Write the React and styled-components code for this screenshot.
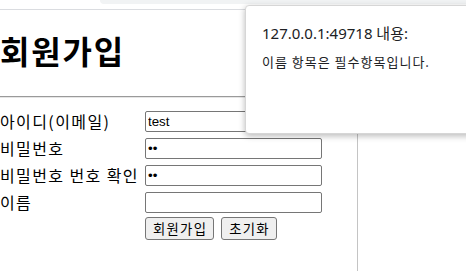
import React from "react";
import styled, { createGlobalStyle } from "styled-components";

const Global = createGlobalStyle`
  html, body { margin: 0; padding: 0; background: #fff; }
  body {
    font-family: "Noto Sans CJK KR", "Noto Sans", sans-serif;
    color: #000;
    overflow: hidden;
    height: 271px;
  }
`;

const Screen = styled.div`
  position: relative;
  width: 466px;
  height: 271px;
  overflow: hidden;
  display: flex;
  flex-direction: column;
`;

const TopBar = styled.div`
  height: 9px;
  flex: none;
  border-bottom: 1px solid #dadce0;
  display: flex;
  justify-content: flex-end;
`;

const TabStrip = styled.div`
  width: 366px;
  height: 4px;
  background: #f1f3f4;
  border-bottom-left-radius: 6px;
`;

const Body = styled.div`
  flex: 1;
  display: flex;
`;

const Pane = styled.div`
  width: 357px;
  border-right: 1px solid #c4c4c4;
  display: flex;
  flex-direction: column;
`;

const Title = styled.h1`
  margin: 17px 0 0 0;
  font-size: 32px;
  line-height: 46px;
  font-weight: 700;
  font-family: "Noto Sans CJK KR", sans-serif;
  letter-spacing: 1.8px;
`;

const Rule = styled.hr`
  margin: 23px 0 0 0;
  border: none;
  border-top: 1px solid #9a9a9a;
  border-bottom: 1px solid #e6e6e6;
  height: 0;
`;

const Form = styled.form`
  margin-top: 13px;
  display: grid;
  grid-template-columns: 145px 177px;
  grid-auto-rows: 21px;
  row-gap: 6px;
  align-items: center;
`;

const Label = styled.label`
  font-size: 16px;
  line-height: 21px;
  white-space: nowrap;
  letter-spacing: 1.4px;
`;

const Field = styled.input`
  box-sizing: border-box;
  width: 177px;
  height: 21px;
  margin: 0;
  padding: 1px 2px;
  border: 1px solid #767676;
  border-radius: 2px;
  font-family: "Liberation Sans", Arial, sans-serif;
  font-size: 13.33px;
  color: #000;
  background: #fff;
  outline: none;
`;

const Actions = styled.div`
  grid-column: 2;
  display: flex;
  gap: 7px;
  margin-top: -2px;
  height: 23px;
`;

const Button = styled.button`
  box-sizing: border-box;
  height: 23px;
  margin: 0;
  padding: 0 6px 0 7px;
  border: 1px solid #767676;
  border-radius: 3px;
  background: #efefef;
  font-family: "Noto Sans CJK KR", sans-serif;
  font-size: 13.33px;
  letter-spacing: 1.3px;
  color: #000;
`;

const Dialog = styled.div`
  position: absolute;
  left: 245px;
  top: 5px;
  width: 260px;
  height: 129px;
  box-sizing: border-box;
  background: #fff;
  border: 1px solid #d6d6d6;
  border-radius: 4px;
  box-shadow: 0 2px 6px rgba(0, 0, 0, 0.28);
  padding: 16px 0 0 16px;
  color: #202124;
`;

const Origin = styled.div`
  font-family: "Noto Sans", "Noto Sans CJK KR", sans-serif;
  font-size: 15px;
  line-height: 22px;
`;

const Message = styled.div`
  margin-top: 8px;
  font-family: "Noto Sans CJK KR", sans-serif;
  font-size: 13px;
  line-height: 19px;
  letter-spacing: 1px;
`;

const rows = [
  { label: "아이디(이메일)", type: "text", value: "test" },
  { label: "비밀번호", type: "password", value: "ab" },
  { label: "비밀번호 번호 확인", type: "password", value: "ab" },
  { label: "이름", type: "text", value: "" },
];

export default function App() {
  return (
    <>
      <Global />
      <Screen>
        <TopBar>
          <TabStrip />
        </TopBar>
        <Body>
          <Pane>
            <Title>회원가입</Title>
            <Rule />
            <Form onSubmit={(e) => e.preventDefault()}>
              {rows.map((r) => (
                <React.Fragment key={r.label}>
                  <Label>{r.label}</Label>
                  <Field type={r.type} defaultValue={r.value} />
                </React.Fragment>
              ))}
              <Actions>
                <Button type="button">회원가입</Button>
                <Button type="button">초기화</Button>
              </Actions>
            </Form>
          </Pane>
        </Body>
        <Dialog>
          <Origin>127.0.0.1:49718 내용:</Origin>
          <Message>이름 항목은 필수항목입니다.</Message>
        </Dialog>
      </Screen>
    </>
  );
}
